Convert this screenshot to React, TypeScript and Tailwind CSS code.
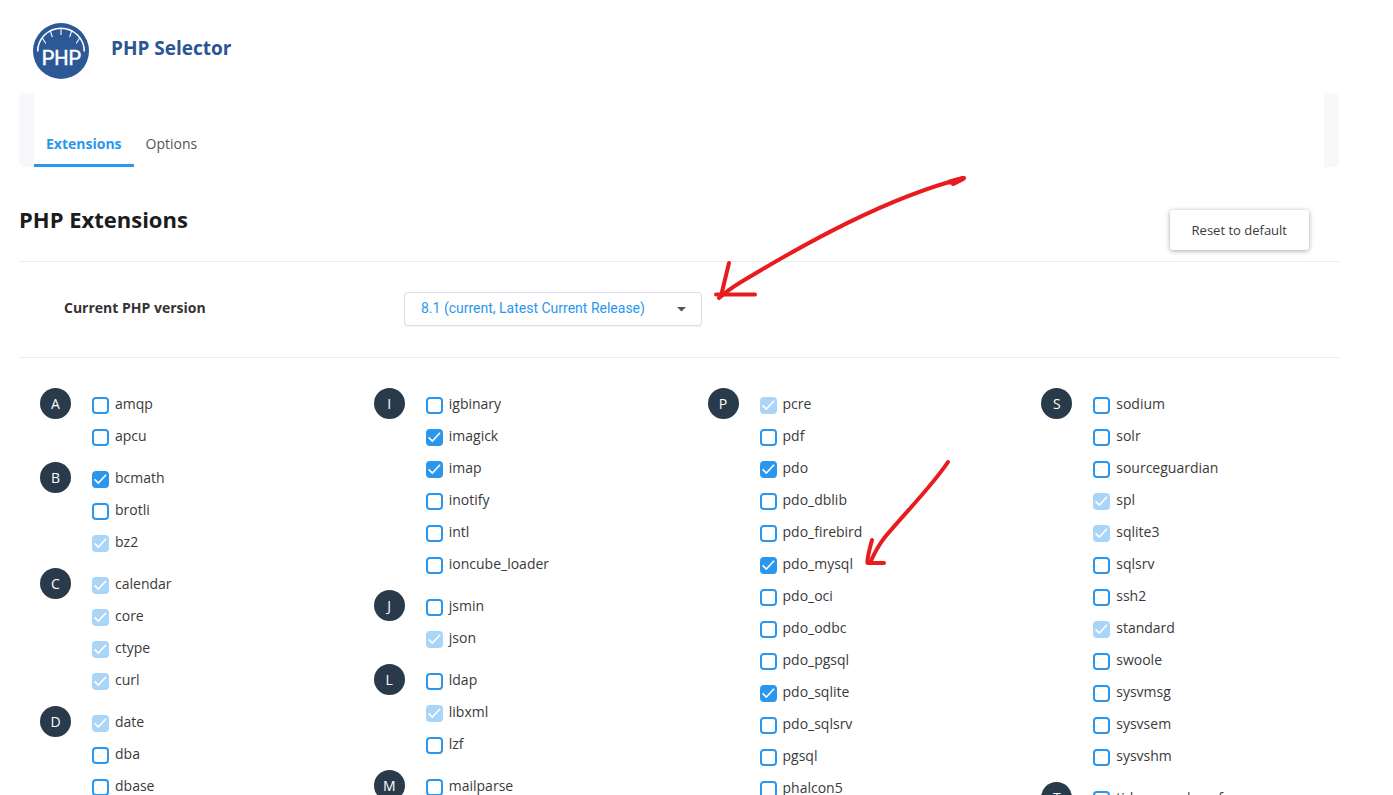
import { useState } from "react"
import clsx from "clsx"

type ExtensionState = "off" | "on" | "locked"

interface Extension {
  name: string
  state: ExtensionState
}

interface Group {
  letter: string
  items: Extension[]
}

const off = (name: string): Extension => ({ name, state: "off" })
const on = (name: string): Extension => ({ name, state: "on" })
const locked = (name: string): Extension => ({ name, state: "locked" })

const COLUMNS: Group[][] = [
  [
    { letter: "A", items: [off("amqp"), off("apcu")] },
    { letter: "B", items: [on("bcmath"), off("brotli"), locked("bz2")] },
    {
      letter: "C",
      items: [locked("calendar"), locked("core"), locked("ctype"), locked("curl")],
    },
    { letter: "D", items: [locked("date"), off("dba"), off("dbase")] },
  ],
  [
    {
      letter: "I",
      items: [
        off("igbinary"),
        on("imagick"),
        on("imap"),
        off("inotify"),
        off("intl"),
        off("ioncube_loader"),
      ],
    },
    { letter: "J", items: [off("jsmin"), locked("json")] },
    { letter: "L", items: [off("ldap"), locked("libxml"), off("lzf")] },
    { letter: "M", items: [off("mailparse")] },
  ],
  [
    {
      letter: "P",
      items: [
        locked("pcre"),
        off("pdf"),
        on("pdo"),
        off("pdo_dblib"),
        off("pdo_firebird"),
        on("pdo_mysql"),
        off("pdo_oci"),
        off("pdo_odbc"),
        off("pdo_pgsql"),
        on("pdo_sqlite"),
        off("pdo_sqlsrv"),
        off("pgsql"),
        off("phalcon5"),
      ],
    },
  ],
  [
    {
      letter: "S",
      items: [
        off("sodium"),
        off("solr"),
        off("sourceguardian"),
        locked("spl"),
        locked("sqlite3"),
        off("sqlsrv"),
        off("ssh2"),
        locked("standard"),
        off("swoole"),
        off("sysvmsg"),
        off("sysvsem"),
        off("sysvshm"),
      ],
    },
    { letter: "T", items: [off("tideways_xhprof")] },
  ],
]

function Logo() {
  return (
    <svg width="56" height="56" viewBox="0 0 56 56" className="shrink-0" aria-hidden="true">
      <circle cx="28" cy="28" r="28" fill="#2c5896" />
      <g stroke="#fff" fill="none">
        <path d="M4.700 28.500A23.300 23.300 0 0 1 51.300 28.500" strokeWidth="1.600" />
        <path d="M28 5v7M17.300 7.700l2 6.500M38.700 7.700l-2 6.500M9.200 14.800l3.600 5.700M46.800 14.800l-3.600 5.700" strokeWidth="1.100" />
      </g>
      <text
        x="28.500"
        y="42"
        textAnchor="middle"
        fill="#fff"
        stroke="#fff"
        strokeWidth="0.500"
        fontSize="20"
        fontFamily="Roboto, sans-serif"
      >
        PHP
      </text>
    </svg>
  )
}

function ExtensionRow({ name, state }: Extension) {
  const [checked, setChecked] = useState(state !== "off")
  const isLocked = state === "locked"

  return (
    <label className="flex h-8 items-start gap-[6px] text-sm text-[#3a3a3a]">
      <span className={clsx("relative mt-[9px] size-[17px] shrink-0", isLocked && "opacity-40")}>
        <input
          type="checkbox"
          checked={checked}
          disabled={isLocked}
          onChange={(e) => setChecked(e.target.checked)}
          className="block size-[17px] appearance-none rounded-[4px] border-2 border-[#2a97ee] bg-white checked:bg-[#2a97ee]"
        />
        {checked && (
          <svg
            viewBox="0 0 17 17"
            className="pointer-events-none absolute inset-0 size-[17px]"
            fill="none"
            stroke="#fff"
            strokeWidth="1.6"
          >
            <path d="M2.6 8.4L6.3 12L14.1 3.8" />
          </svg>
        )}
      </span>
      <span className="leading-8">{name}</span>
    </label>
  )
}

function LetterGroup({ letter, items }: Group) {
  return (
    <div className="flex gap-[21px]">
      <div className="flex size-[31px] shrink-0 items-center justify-center rounded-full bg-[#293a4a] text-sm font-medium text-white">
        {letter}
      </div>
      <div>
        {items.map((item) => (
          <ExtensionRow key={item.name} {...item} />
        ))}
      </div>
    </div>
  )
}

// Hand-drawn arrows that point at the version select and at pdo_mysql
function Arrows() {
  return (
    <svg
      width="300"
      height="420"
      viewBox="700 160 300 420"
      className="pointer-events-none absolute left-[700px] top-[160px]"
      fill="none"
      stroke="#e81c1e"
      strokeWidth="4"
      strokeLinecap="round"
      strokeLinejoin="round"
      aria-hidden="true"
    >
      <path d="M953 184L964 178C888 197 804 244 741 282Q728 290 719 298" />
      <path d="M950 182L963 178.500L954 183" strokeWidth="5" />
      <path d="M729 263L721 296M716 294.500H755" />
      <path d="M948 462C932 486 905 513 885 537Q877 547 870 563" />
      <path d="M872 540Q867 558 867.500 563L884 563" />
    </svg>
  )
}

export default function App() {
  return (
    <div className="relative h-screen overflow-hidden bg-white pl-[19px] pr-[54px] font-['Open_Sans',sans-serif] text-[#333]">
      <header className="flex h-[93px] items-center gap-[22px] pb-1 pl-[14px] pt-[13px]">
        <Logo />
        <h1 className="pb-[6px] text-[19px] leading-7 font-bold text-[#2a5594]">PHP Selector</h1>
      </header>

      <nav className="flex h-[74px] items-end rounded-[5px] border-x-[15px] border-[#f7f8fa] text-sm">
        <a
          href="#extensions"
          className="flex h-11 items-center border-b-[3px] border-[#2a97ee] px-3 font-bold text-[#2a97ee]"
        >
          Extensions
        </a>
        <a href="#options" className="flex h-11 items-center border-b-[3px] border-transparent px-3 text-[#555]">
          Options
        </a>
      </nav>

      <section className="flex h-[95px] items-start justify-between border-b border-[#ebebeb] pr-[30px]">
        <h2 className="pt-9 text-[22px] leading-8 font-bold text-[#1c1c1c]">PHP Extensions</h2>
        <button
          type="button"
          className="mt-[43px] h-10 rounded-[3px] bg-white px-[22px] pt-[2px] text-[13px] text-[#3a3a3a] shadow-[0_1px_5px_rgba(0,0,0,0.35)]"
        >
          Reset to default
        </button>
      </section>

      <section className="flex h-24 items-start border-b border-[#ebebeb] pl-[45px] pt-[30px]">
        <label htmlFor="php-version" className="w-[340px] text-sm leading-8 font-bold">
          Current PHP version
        </label>
        <div className="relative">
          <select
            id="php-version"
            className="h-[34px] w-[298px] appearance-none rounded-[4px] border border-[#dcdcea] bg-white px-4 pb-[2px] font-[Roboto,sans-serif] text-sm text-[#2a97ee] shadow-[0_1px_1px_rgba(0,0,0,0.06)]"
          >
            <option>8.1 (current, Latest Current Release)</option>
          </select>
          <svg
            width="9"
            height="5"
            viewBox="0 0 9 5"
            className="pointer-events-none absolute right-4 top-[15px]"
            aria-hidden="true"
          >
            <path d="M0 0H9L4.500 4.500Z" fill="#555" />
          </svg>
        </div>
      </section>

      <main className="-mr-9 ml-[21px] grid grid-cols-4 pt-[30px]">
        {COLUMNS.map((groups) => (
          <div key={groups[0].letter} className="flex flex-col gap-[10px]">
            {groups.map((group) => (
              <LetterGroup key={group.letter} {...group} />
            ))}
          </div>
        ))}
      </main>

      <Arrows />
    </div>
  )
}
